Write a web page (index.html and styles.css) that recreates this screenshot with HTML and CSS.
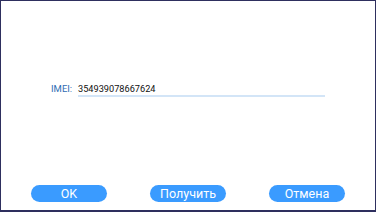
FILE: index.html
```html
<!DOCTYPE html>
<html lang="ru">
<head>
    <meta charset="UTF-8">
    <meta name="viewport" content="width=device-width, initial-scale=1.0">
    <title>IMEI</title>
    <link rel="stylesheet" href="styles.css">
</head>
<body>

<div class="dialog">
    <div class="field">
        <span class="label">IMEI:</span>
        <span class="value">354939078667624</span>
    </div>

    <div class="button-row">
        <button class="button">OK</button>
        <button class="button">Получить</button>
        <button class="button">Отмена</button>
    </div>
</div>

</body>
</html>
```

FILE: styles.css
```css
* {
    margin: 0;
    padding: 0;
    box-sizing: border-box;
}

body {
    font-family: Roboto, 'Noto Sans', sans-serif;
    background: #fff;
}

.dialog {
    width: 376px;
    height: 212px;
    border: 1px solid #2e2f5e;
    border-bottom-width: 2px;
    display: flex;
    flex-direction: column;
}

.field {
    margin-top: 82px;
    padding-left: 50px;
    display: flex;
    align-items: flex-end;
}

.label {
    font-size: 9.5px;
    line-height: 12px;
    color: #2f6db3;
    width: 27px;
    padding-bottom: 2px;
}

.value {
    width: 247px;
    font-size: 9.2px;
    line-height: 12px;
    color: #111;
    border-bottom: 2px solid #d3e5f7;
}

.button-row {
    margin-top: auto;
    padding: 0 30px 8px;
    display: flex;
    justify-content: space-between;
}

.button {
    width: 76px;
    height: 17px;
    border: none;
    border-radius: 9px;
    background: #3a9bff;
    color: #fff;
    font-family: Roboto, sans-serif;
    font-size: 12.5px;
}
```
